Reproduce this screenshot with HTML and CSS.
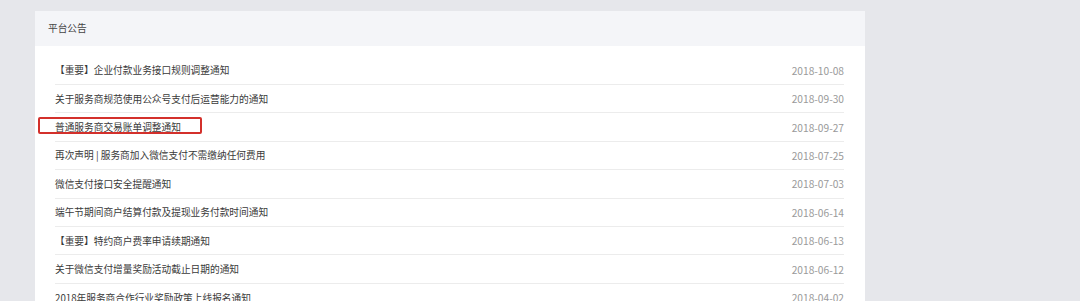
FILE: index.html
```html
<!DOCTYPE html>
<html lang="zh-CN">
<head>
<meta charset="utf-8">
<title>平台公告</title>
<link rel="stylesheet" href="styles.css">
</head>
<body>
<div class="page">
  <section class="card">
    <header class="card-head">平台公告</header>
    <ul class="notice-list">
      <li class="notice"><span class="title">【重要】企业付款业务接口规则调整通知</span><span class="date">2018-10-08</span></li>
      <li class="notice"><span class="title">关于服务商规范使用公众号支付后运营能力的通知</span><span class="date">2018-09-30</span></li>
      <li class="notice highlighted"><span class="title">普通服务商交易账单调整通知</span><span class="date">2018-09-27</span><span class="mark"></span></li>
      <li class="notice"><span class="title">再次声明 | 服务商加入微信支付不需缴纳任何费用</span><span class="date">2018-07-25</span></li>
      <li class="notice"><span class="title">微信支付接口安全提醒通知</span><span class="date">2018-07-03</span></li>
      <li class="notice"><span class="title">端午节期间商户结算付款及提现业务付款时间通知</span><span class="date">2018-06-14</span></li>
      <li class="notice"><span class="title">【重要】特约商户费率申请续期通知</span><span class="date">2018-06-13</span></li>
      <li class="notice"><span class="title">关于微信支付增量奖励活动截止日期的通知</span><span class="date">2018-06-12</span></li>
      <li class="notice"><span class="title">2018年服务商合作行业奖励政策上线报名通知</span><span class="date">2018-04-02</span></li>
    </ul>
  </section>
</div>
</body>
</html>
```

FILE: styles.css
```css
html, body {
  margin: 0;
  padding: 0;
}
body {
  background: #e6e7eb;
  font-family: "Noto Sans CJK SC", "Microsoft YaHei", sans-serif;
  color: #333;
  overflow: hidden;
}
.page {
  padding: 11px 0 0 35px;
}
.card {
  width: 830px;
  background: #fff;
}
.card-head {
  height: 35px;
  background: #f4f5f8;
  padding-left: 13px;
  font-size: 9.7px;
  line-height: 35px;
  color: #444;
}
.notice-list {
  list-style: none;
  margin: 0;
  padding: 10.5px 21px 0 20px;
}
.notice {
  position: relative;
  display: flex;
  align-items: center;
  justify-content: space-between;
  height: 28.43px;
  box-sizing: border-box;
  border-bottom: 1px solid #ececec;
  font-size: 9.7px;
}
.title {
  color: #3a3a3a;
}
.date {
  color: #9a9a9a;
  font-size: 10.2px;
}
.mark {
  position: absolute;
  left: -17px;
  top: 4px;
  width: 164px;
  height: 17px;
  box-sizing: border-box;
  border: 2px solid #d3302b;
  border-radius: 2px;
}
```
